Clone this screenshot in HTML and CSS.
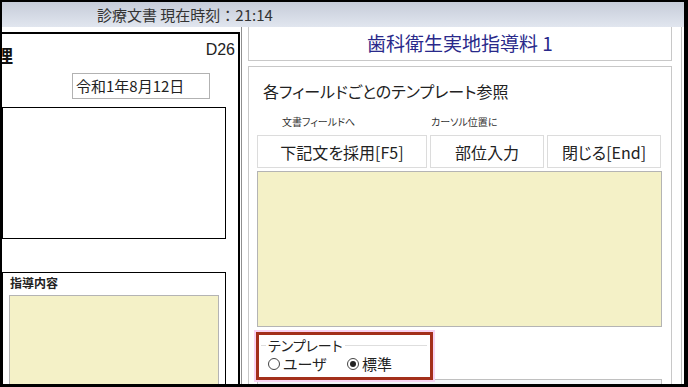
FILE: index.html
```html
<html>
    <head>
        <link rel="stylesheet" href="styles.css">
    </head>
    <body>
        <div class="window">
            <div class="titlebar">診療文書 現在時刻：21:14</div>
            <div class="main">
                <div class="left">
                    <div class="left-head">
                        <b class="doc-title">理</b>
                        <span class="doc-code">D26</span>
                    </div>
                    <div class="date-box">令和1年8月12日</div>
                    <div class="info-box"></div>
                    <div class="content-box">
                        <div class="content-label">指導内容</div>
                        <div class="memo"></div>
                    </div>
                </div>
                <div class="splitter"></div>
                <div class="right">
                    <div class="item-title">歯科衛生実地指導料 1</div>
                    <div class="tpl-panel">
                        <div class="tpl-heading">各フィールドごとのテンプレート参照</div>
                        <div class="hint-row">
                            <span class="hint hint-doc">文書フィールドへ</span>
                            <span class="hint">カーソル位置に</span>
                        </div>
                        <div class="btn-row">
                            <button class="btn btn-adopt">下記文を採用[F5]</button>
                            <button class="btn btn-part">部位入力</button>
                            <button class="btn btn-close">閉じる[End]</button>
                        </div>
                        <div class="tpl-text"></div>
                        <div class="kind-group">
                            <fieldset class="kind-box">
                                <legend>テンプレート</legend>
                                <div class="radio-row">
                                    <span class="radio-item"><span class="radio"></span>ユーザ</span>
                                    <span class="radio-item"><span class="radio checked"></span>標準</span>
                                </div>
                            </fieldset>
                        </div>
                        <div class="tpl-list"></div>
                    </div>
                </div>
                <div class="edge"></div>
            </div>
        </div>
    </body>
</html>
```

FILE: styles.css
```css
*{
    box-sizing: border-box;
    font-family: "Noto Sans CJK JP", "Liberation Sans", sans-serif;
}
body{
    margin: 0;
    width: 688px;
    height: 387px;
    overflow: hidden;
    background: #000;
}
.window{
    width: 688px;
    height: 387px;
    border-style: solid;
    border-color: #000;
    border-width: 2px 4px 3px 2px;
    background: #fff;
    display: flex;
    flex-direction: column;
    overflow: hidden;
}
.titlebar{
    flex: none;
    height: 25px;
    line-height: 25px;
    padding-left: 95px;
    font-size: 15px;
    color: #333;
    background: linear-gradient(#c6ccd9, #e1e6ef);
}
.main{
    flex: 1;
    display: flex;
    min-height: 0;
}

/* left document panel */
.left{
    flex: none;
    width: 238px;
    margin-top: 5px;
    border-top: 2px solid #000;
    border-right: 2px solid #000;
    overflow: hidden;
    display: flex;
    flex-direction: column;
}
.left-head{
    flex: none;
    height: 39px;
    display: flex;
    justify-content: space-between;
    align-items: flex-start;
}
.doc-title{
    font-size: 18px;
    line-height: 18px;
    margin: 12px 0 0 -7px;
    color: #111;
}
.doc-code{
    font-family: "Liberation Sans", sans-serif;
    font-size: 16px;
    line-height: 16px;
    padding: 8px 3px 0 0;
    color: #222;
}
.date-box{
    flex: none;
    width: 138px;
    height: 26px;
    margin-left: 70px;
    border: 1px solid #b2b2b2;
    padding: 0 3px;
    font-size: 15px;
    line-height: 24px;
    color: #222;
}
.info-box{
    flex: none;
    width: 224px;
    height: 132px;
    margin-top: 8px;
    border: 1px solid #000;
}
.content-box{
    flex: none;
    width: 224px;
    height: 140px;
    margin-top: 33px;
    border: 1px solid #000;
    border-bottom: none;
    padding: 2px 0 0 6px;
}
.content-label{
    font-size: 12px;
    font-weight: bold;
    line-height: 16px;
    padding-left: 1px;
    color: #222;
}
.memo{
    width: 210px;
    height: 120px;
    margin-top: 4px;
    background: #f4f1c7;
    border: 1px solid #b4b4b4;
}

.splitter{
    flex: none;
    width: 1px;
    margin: 0 6px 0 1px;
    background: #8f8f8f;
}

/* right template panel */
.right{
    flex: none;
    width: 424px;
    display: flex;
    flex-direction: column;
}
.item-title{
    flex: none;
    height: 34px;
    border: 1px solid #c8c8c8;
    border-top: none;
    text-align: center;
    font-size: 19px;
    line-height: 32px;
    color: #29298a;
}
.tpl-panel{
    flex: none;
    height: 330px;
    margin-top: 5px;
    border: 1px solid #c8c8c8;
    padding: 0 9px 0 8px;
    font-feature-settings: "palt";
}
.tpl-heading{
    padding: 14px 0 0 6px;
    font-size: 16px;
    line-height: 20px;
    color: #222;
}
.hint-row{
    display: flex;
    margin-top: 15px;
    height: 12px;
}
.hint{
    font-size: 10px;
    line-height: 12px;
    color: #333;
}
.hint-doc{
    width: 174px;
    padding-left: 25px;
}
.btn-row{
    display: flex;
    gap: 3px;
    margin-top: 7px;
}
.btn{
    height: 33px;
    padding: 0;
    background: #fff;
    border: 1px solid #dcdcdc;
    font-size: 16px;
    color: #222;
    font-feature-settings: "palt";
}
.btn-adopt{
    width: 170px;
}
.btn-part,
.btn-close{
    width: 114px;
}
.tpl-text{
    height: 156px;
    margin-top: 3px;
    background: #f4f1c7;
    border: 1px solid #b4b4b4;
}
.kind-group{
    position: relative;
    z-index: 1;
    width: 177px;
    height: 48px;
    margin: 5px 0 0 -1px;
    border: 3px solid #a3301b;
    background: #fff;
    box-shadow: 0 0 0 2px #f8d3f2;
}
.kind-box{
    margin: 1px 3px 0 2px;
    padding: 0 0 0 5px;
    border: none;
    border-top: 1px solid #dedede;
}
.kind-box legend{
    padding: 0 2px;
    font-size: 14px;
    line-height: 18px;
    color: #222;
}
.radio-row{
    display: flex;
    height: 20px;
    align-items: center;
    padding-left: 2px;
}
.radio-item{
    display: flex;
    align-items: center;
    gap: 3px;
    width: 79px;
    font-size: 15px;
    line-height: 20px;
    color: #222;
}
.radio{
    width: 12px;
    height: 12px;
    border: 1px solid #444;
    border-radius: 50%;
    display: flex;
    align-items: center;
    justify-content: center;
}
.radio.checked::after{
    content: "";
    width: 6px;
    height: 6px;
    border-radius: 50%;
    background: #222;
}
.tpl-list{
    height: 20px;
    margin-top: -1px;
    border: 1px solid #c0c0c0;
    background: #f3f5f8;
}

.edge{
    flex: none;
    width: 1px;
    margin-left: 9px;
    background: #bdbdbd;
}
```
